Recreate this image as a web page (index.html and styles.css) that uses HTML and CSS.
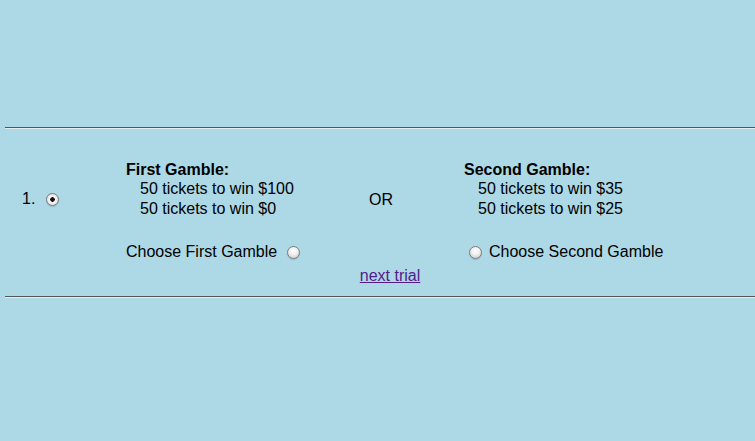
FILE: index.html
```html
<!DOCTYPE html>
<html lang="en">
<head>
  <meta charset="UTF-8">
  <title>Gamble choice</title>
  <link rel="stylesheet" href="styles.css">
</head>
<body>

<div class="rule rule-top"></div>

<form class="trial">
  <div class="num">
    <span>1.</span>
    <input type="radio" class="radio" name="trial" checked>
  </div>

  <div class="gamble">
    <div class="title">First Gamble:</div>
    <div class="line">50 tickets to win $100</div>
    <div class="line">50 tickets to win $0</div>
  </div>

  <div class="or">OR</div>

  <div class="gamble">
    <div class="title">Second Gamble:</div>
    <div class="line">50 tickets to win $35</div>
    <div class="line">50 tickets to win $25</div>
  </div>

  <label class="choose choose-first">
    Choose First Gamble
    <input type="radio" class="radio" name="choice">
  </label>

  <label class="choose choose-second">
    <input type="radio" class="radio" name="choice">
    Choose Second Gamble
  </label>

  <a href="#" class="next">next trial</a>
</form>

<div class="rule"></div>

</body>
</html>
```

FILE: styles.css
```css
body {
  margin: 0;
  background: #add8e6;
  font-family: 'Liberation Sans', Arial, sans-serif;
  font-size: 16px;
  line-height: 20px;
  color: #000;
}
.rule {
  margin-left: 5px;
  height: 0;
  border-top: 1px solid #555;
  border-bottom: 1px solid #e4edf0;
}
.rule-top { margin-top: 127px; }

.trial {
  display: grid;
  grid-template-columns: 104px 243px 95px 190px;
  grid-template-rows: 82px 20px 24px;
  padding: 31px 0 10px 22px;
  margin: 0;
}
.num {
  display: flex;
  align-items: center;
  gap: 11px;
  margin-top: 29px;
  align-self: start;
}
.or {
  margin-top: 30px;
  align-self: start;
}
.title { font-weight: bold; line-height: 19px; }
.line { padding-left: 14px; }

.choose {
  display: flex;
  align-items: center;
  white-space: nowrap;
}
.choose-first { gap: 10px; grid-column: 2; }
.choose-second { gap: 7px; grid-column: 4; padding-left: 5px; }

.next {
  grid-column: 2 / 5;
  justify-self: center;
  align-self: end;
  color: #551a8b;
}

.radio {
  -webkit-appearance: none;
  appearance: none;
  width: 13px;
  height: 13px;
  margin: 0;
  border-radius: 50%;
  border: 1px solid #7d7d7d;
  box-sizing: border-box;
  background: radial-gradient(circle at 50% 35%, #ffffff 0%, #f1f1f1 40%, #c4c4c4 100%);
  box-shadow: 0 1px 1px rgba(0,0,0,0.15);
  flex: none;
}
.radio:checked {
  background: radial-gradient(circle, #111 0 2px, #f4f4f4 2.5px, #f4f4f4 45%, #c8c8c8 100%);
}
```
